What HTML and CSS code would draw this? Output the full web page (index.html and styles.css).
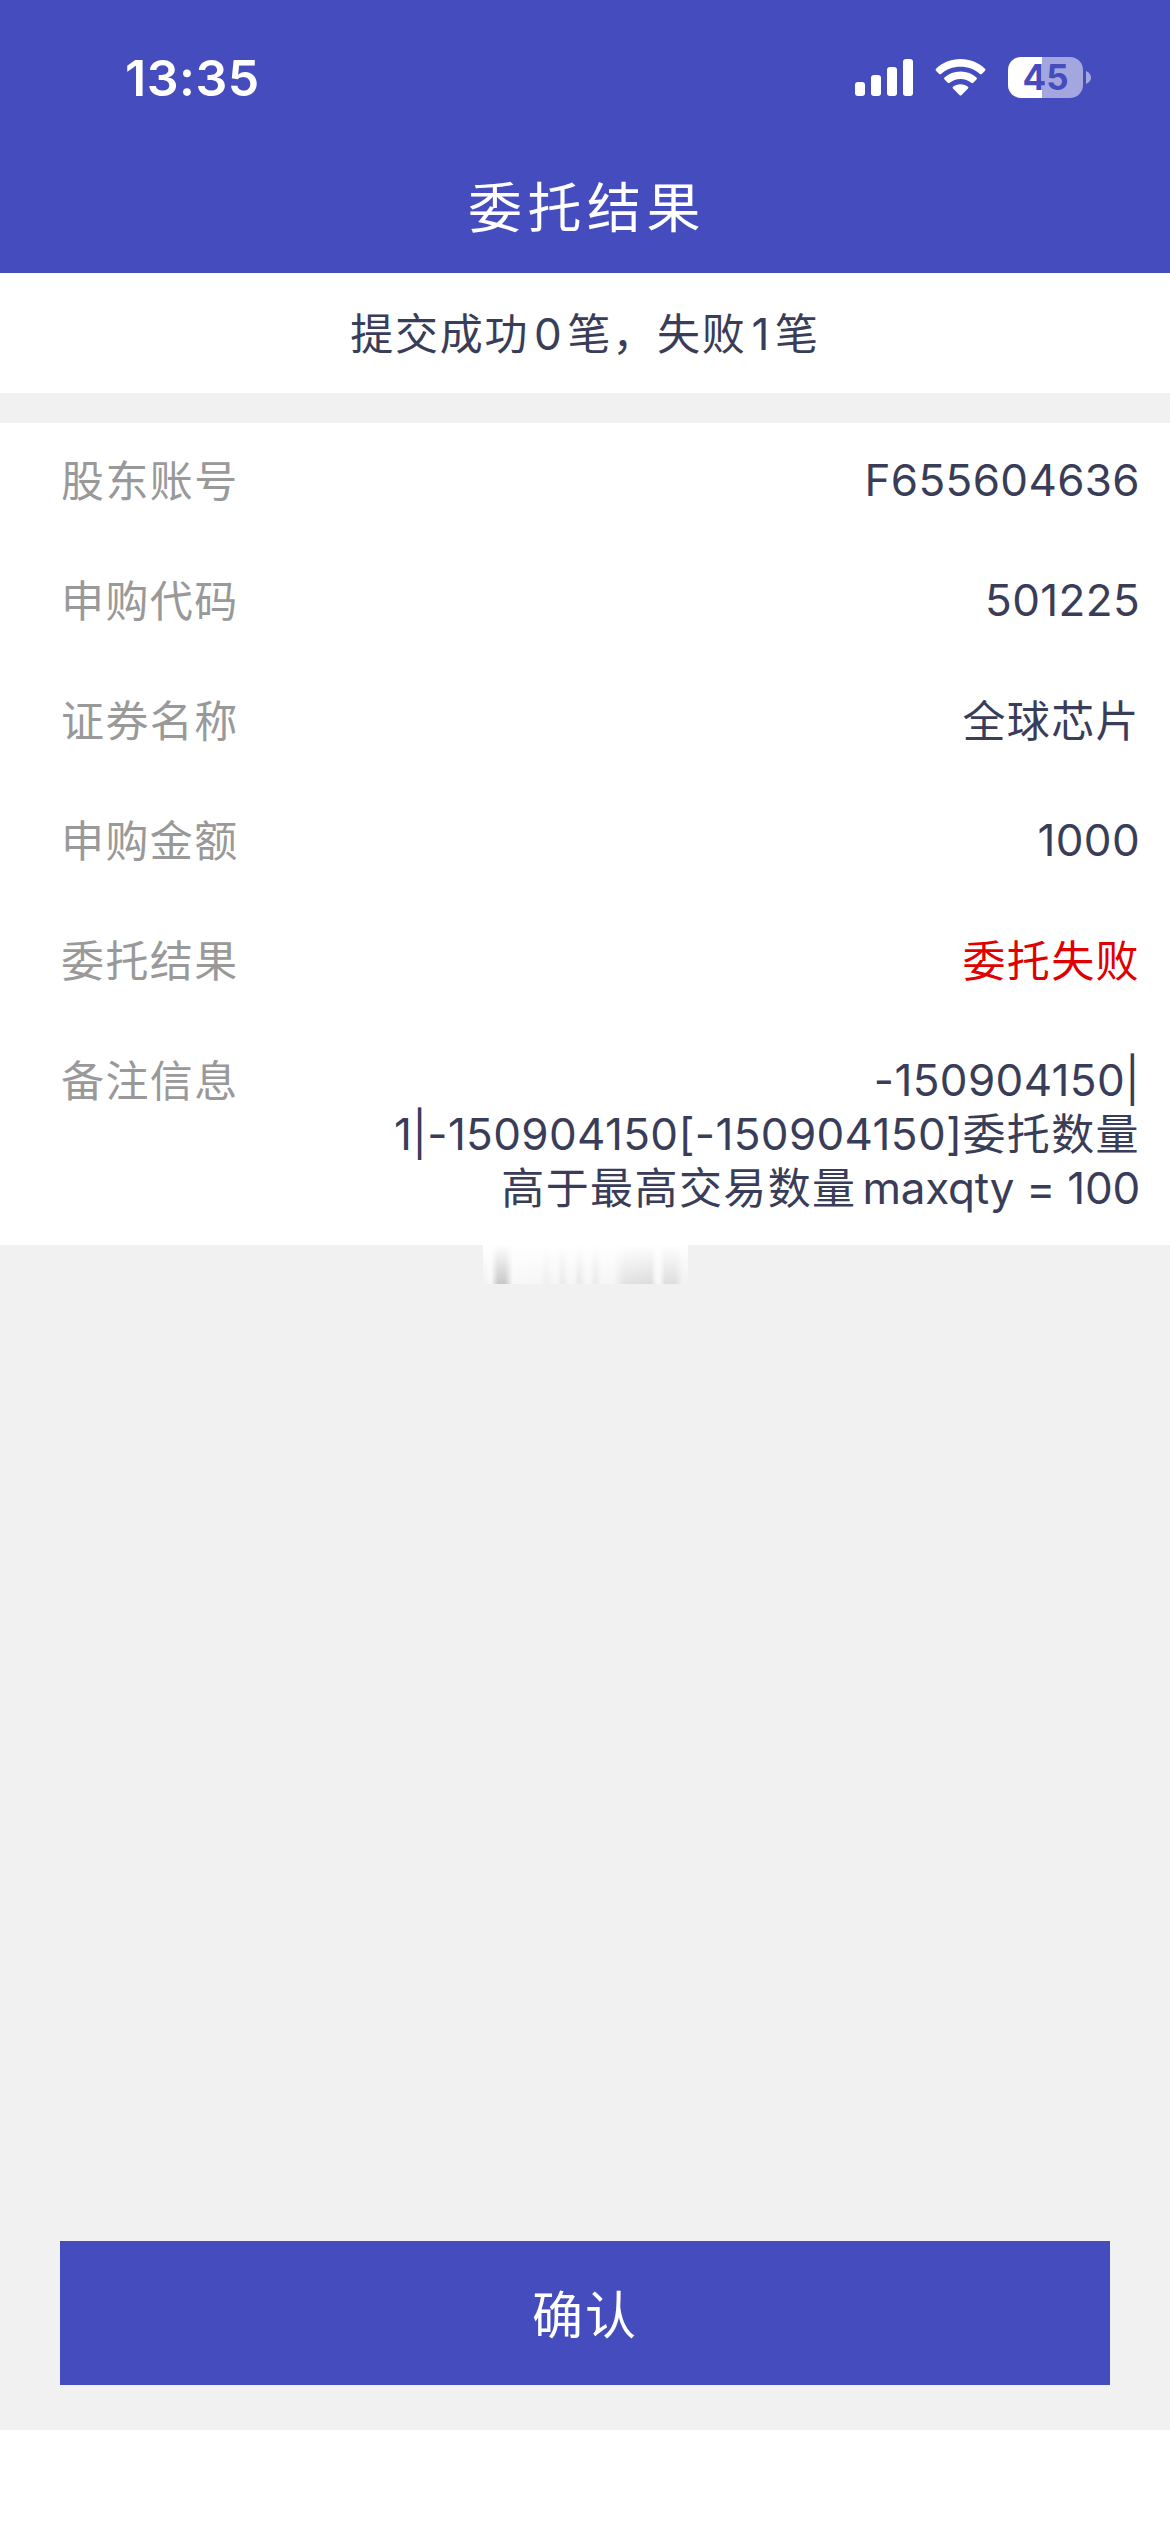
FILE: index.html
```html
<!DOCTYPE html>
<html lang="zh-CN">
<head>
<meta charset="utf-8">
<title>委托结果</title>
<link rel="stylesheet" href="styles.css">
</head>
<body>
<div class="screen">
  <header class="header">
    <div class="status">
      <span class="clock">13:35</span>
      <div class="status-icons">
        <svg class="signal" width="58" height="37" viewBox="0 0 58 37" fill="#fff">
          <rect x="0" y="23" width="10" height="14" rx="3"/>
          <rect x="16" y="16" width="10" height="21" rx="3"/>
          <rect x="32" y="8" width="10" height="29" rx="3"/>
          <rect x="48" y="0" width="10" height="37" rx="3"/>
        </svg>
        <svg class="wifi" width="51" height="37" viewBox="0 0 51 37" fill="#fff">
          <path d="M25.500 0C35 0 43.500 3.500 50 9.700Q51 10.700 50 11.700L46.800 14.900Q45.900 15.700 44.900 14.900C39.500 10.200 33 7.700 25.500 7.700S11.500 10.200 6.100 14.900Q5.100 15.700 4.200 14.900L1 11.700Q0 10.700 1 9.700C7.500 3.500 16 0 25.500 0Z"/>
          <path d="M25.500 12.500C31.700 12.500 37.300 14.700 41.500 18.600Q42.500 19.600 41.500 20.600L38.200 23.800Q37.300 24.600 36.300 23.800C33.300 21.300 29.700 19.900 25.500 19.900S17.700 21.300 14.700 23.800Q13.700 24.600 12.800 23.800L9.500 20.600Q8.500 19.600 9.500 18.600C13.700 14.700 19.300 12.500 25.500 12.500Z"/>
          <path d="M25.500 25.200C28.500 25.200 31 26.100 33 27.700Q34 28.600 33 29.600L26.600 36Q25.500 37 24.400 36L18 29.600Q17 28.600 18 27.700C20 26.100 22.500 25.200 25.500 25.200Z"/>
        </svg>
        <div class="battery">
          <span class="battery-body">45</span>
          <svg width="5" height="13" viewBox="0 0 5 13" fill="#a3a6df"><path d="M0 0Q5 2.500 5 6.500T0 13Z"/></svg>
        </div>
      </div>
    </div>
    <h1 class="title">委托结果</h1>
  </header>

  <main class="content">
    <p class="summary">提交成功<span class="count">0</span>笔，失败<span class="count">1</span>笔</p>

    <dl class="details">
      <div class="row"><dt>股东账号</dt><dd class="num">F655604636</dd></div>
      <div class="row"><dt>申购代码</dt><dd class="num">501225</dd></div>
      <div class="row"><dt>证券名称</dt><dd class="name">全球芯片</dd></div>
      <div class="row"><dt>申购金额</dt><dd class="num">1000</dd></div>
      <div class="row"><dt>委托结果</dt><dd class="name failed">委托失败</dd></div>
      <div class="row"><dt>备注信息</dt><dd><span class="num">-150904150|</span><br><span class="num">1|-150904150[-150904150]</span>委托数量<br>高于最高交易数量<span class="num remark-tail">maxqty = 100</span></dd></div>
    </dl>

    <div class="smudge"></div>

    <button class="confirm" type="button">确认</button>
  </main>
</div>
</body>
</html>
```
FILE: styles.css
```css
* {
  box-sizing: border-box;
}

body,
h1,
p,
dl,
dd {
  margin: 0;
}

body {
  background: #fff;
  color: #3a3d58;
  font-family: Inter, "Noto Sans CJK SC", sans-serif;
  font-size: 43px;
  line-height: 54px;
}

.screen {
  display: flex;
  flex-direction: column;
  width: 1170px;
  height: 2532px;
  padding-bottom: 102px;
}

.header {
  height: 273px;
  background: #444cbe;
  color: #fff;
}

.status {
  display: flex;
  justify-content: space-between;
  align-items: center;
  height: 155px;
  padding: 0 79px 0 125px;
}

.clock {
  font-size: 50px;
  font-weight: 600;
  letter-spacing: 0.5px;
}

.status-icons {
  display: flex;
  align-items: center;
}

.wifi {
  margin-left: 22px;
}

.battery {
  display: flex;
  align-items: center;
  gap: 3px;
  margin-left: 22px;
}

.battery-body {
  width: 75px;
  height: 41px;
  border-radius: 13px;
  background: linear-gradient(90deg, #fff 34px, #a3a6df 34px);
  color: #444cbe;
  font-size: 35px;
  font-weight: 700;
  line-height: 41px;
  text-align: center;
}

.title {
  padding-left: 4px;
  font-family: "Noto Sans CJK SC", sans-serif;
  font-size: 54px;
  font-weight: 400;
  letter-spacing: 5.5px;
  line-height: 100px;
  text-align: center;
}

.content {
  display: flex;
  flex: 1;
  flex-direction: column;
  background: #f1f1f1;
}

.summary {
  height: 120px;
  margin-bottom: 30px;
  background: #fff;
  letter-spacing: 1.7px;
  line-height: 122px;
  text-align: center;
}

.count {
  margin: 0 5px;
  font-size: 44px;
  letter-spacing: 0.7px;
}

.details {
  background: #fff;
}

.row {
  display: flex;
  justify-content: space-between;
  min-height: 120px;
  padding: 30px 30px 30px 61px;
  letter-spacing: 1.4px;
}

.row dt {
  padding-top: 1px;
  color: #999;
}

.row dd {
  text-align: right;
}

.row .name {
  padding-top: 1px;
}

.num {
  font-size: 44px;
  letter-spacing: 0.35px;
}

.remark-tail {
  margin-left: 6px;
  letter-spacing: -0.25px;
}

.row .failed {
  color: #e10000;
}

.smudge {
  width: 205px;
  height: 39px;
  margin: 0 auto;
  background:
    linear-gradient(180deg, #fff, rgba(255, 255, 255, 0)),
    linear-gradient(90deg, #f1f1f1, #f8f8f8 8px, #c8c8c8 15px, #c8c8c8 22px, #f8f8f8 30px, #f6f6f6 58px, #eee 63px, #f6f6f6 70px, #f6f6f6 74px, #e9e9e9 79px, #f6f6f6 86px, #f6f6f6 91px, #e7e7e7 96px, #f6f6f6 103px, #f6f6f6 107px, #e9e9e9 112px, #f6f6f6 119px, #f6f6f6 130px, #e2e2e2 142px, #dcdcdc 168px, #f6f6f6 173px, #f6f6f6 177px, #dedede 182px, #dedede 192px, #f1f1f1 200px);
}

.confirm {
  height: 144px;
  margin: auto 60px 45px;
  padding: 0;
  border: 0;
  background: #444cbe;
  color: #fff;
  font-family: "Noto Sans CJK SC", sans-serif;
  font-size: 51px;
  letter-spacing: 2px;
  line-height: 142px;
  padding-bottom: 2px;
}
```
